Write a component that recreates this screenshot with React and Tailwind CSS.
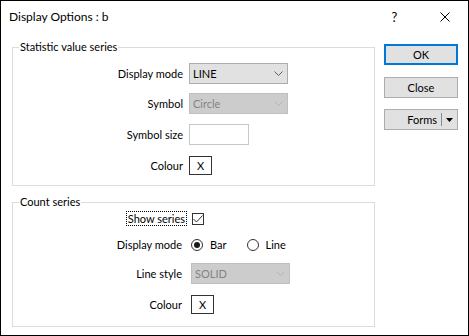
import React from 'react';

const font = { fontFamily: 'Lato, "Liberation Sans", sans-serif' };

const Chevron = ({ disabled }) => (
  <svg width="9" height="5" viewBox="0 0 9 5" className="mr-[4px]">
    <path d="M0.5 0.5 L4.5 4.5 L8.5 0.5" fill="none" stroke={disabled ? '#b5b5b5' : '#606060'} strokeWidth="1" />
  </svg>
);

const Combo = ({ value, disabled }) => (
  <div
    className={`flex items-center justify-between w-[99px] h-[21px] border pl-[3px] ${
      disabled ? 'bg-[#cccccc] border-[#bfbfbf] text-[#838383]' : 'bg-[#e1e1e1] border-[#adadad] text-black'
    }`}
  >
    <span>{value}</span>
    <Chevron disabled={disabled} />
  </div>
);

const ColourButton = () => (
  <div className="w-[23px] h-[19px] border border-[#333] bg-white flex items-center justify-center text-black">X</div>
);

const Radio = ({ checked }) => (
  <div className="w-[12px] h-[12px] rounded-full border border-[#333] bg-white flex items-center justify-center">
    {checked && <div className="w-[6px] h-[6px] rounded-full bg-[#1a1a1a]" />}
  </div>
);

const Group = ({ title, className, children }) => (
  <fieldset className={`border border-[#dcdcdc] ${className}`}>
    <legend className="ml-[6px] px-[1px] leading-[16px] text-black">{title}</legend>
    {children}
  </fieldset>
);

export default function App() {
  return (
    <div style={font} className="w-[469px] h-[336px] border border-black bg-white text-[11px] leading-[16px] text-black flex flex-col">
      <div className="h-[31px] flex items-center pl-[8px] text-[12px]">
        <span className="flex-1 mt-[1px]">Display Options : b</span>
        <span className="w-[55px] text-center text-[13px]">?</span>
        <div className="w-[46px] flex justify-center">
          <svg width="10" height="10" viewBox="0 0 10 10">
            <path d="M0.5 0.5 L9.5 9.5 M9.5 0.5 L0.5 9.5" stroke="#000" strokeWidth="1" />
          </svg>
        </div>
      </div>

      <div className="flex flex-1">
        <div className="w-[363px] ml-[11px] mt-[7px] flex flex-col">
          <Group title="Statistic value series" className="h-[147px]">
            <div className="grid grid-cols-[170px_auto] gap-x-[6px] items-center mt-[8px]">
              <div className="text-right">Display mode</div>
              <Combo value="LINE" />
              <div className="text-right mt-[9px]">Symbol</div>
              <div className="mt-[9px]"><Combo value="Circle" disabled /></div>
              <div className="text-right mt-[10px]">Symbol size</div>
              <div className="mt-[10px] w-[60px] h-[21px] border border-[#c8c8c8] bg-white" />
              <div className="text-right mt-[11px]">Colour</div>
              <div className="mt-[11px]"><ColourButton /></div>
            </div>
          </Group>

          <Group title="Count series" className="h-[133px] mt-[8px]">
            <div className="grid grid-cols-[169px_auto] gap-x-[9px] items-center mt-[1px]">
              <div className="flex justify-end">
                <span className="border border-dotted border-black px-[1px] leading-[13px] mr-[-5px]">Show series</span>
              </div>
              <div className="w-[12px] h-[12px] border border-[#333] bg-white flex items-center justify-center ml-[1px]">
                <svg width="10" height="8" viewBox="0 0 10 8">
                  <path d="M0.5 4 L3.5 7 L9.5 0.5" fill="none" stroke="#333" strokeWidth="1" />
                </svg>
              </div>
              <div className="text-right mt-[11px]">Display mode</div>
              <div className="mt-[11px] flex items-center">
                <Radio checked />
                <span className="ml-[7px]">Bar</span>
                <span className="ml-[20px]"><Radio /></span>
                <span className="ml-[7px]">Line</span>
              </div>
              <div className="text-right mt-[10px]">Line style</div>
              <div className="mt-[10px]"><Combo value="SOLID" disabled /></div>
              <div className="text-right mt-[11px]">Colour</div>
              <div className="mt-[11px]"><ColourButton /></div>
            </div>
          </Group>
        </div>

        <div className="ml-[9px] mt-[12px] flex flex-col w-[74px]">
          <button className="h-[21px] border-2 border-[#0078d7] bg-[#e1e1e1] text-black">OK</button>
          <button className="h-[21px] mt-[12px] border border-[#adadad] bg-[#e1e1e1] text-black">Close</button>
          <button className="h-[21px] mt-[11px] border border-[#adadad] bg-[#e1e1e1] text-black flex items-center justify-end pr-[4px]">
            <span className="mr-[4px]">Forms</span>
            <span className="w-[1px] h-[13px] bg-[#8a8a8a] mr-[4px]" />
            <svg width="7" height="4" viewBox="0 0 7 4">
              <path d="M0 0 L7 0 L3.5 4 Z" fill="#000" />
            </svg>
          </button>
        </div>
      </div>
    </div>
  );
}
